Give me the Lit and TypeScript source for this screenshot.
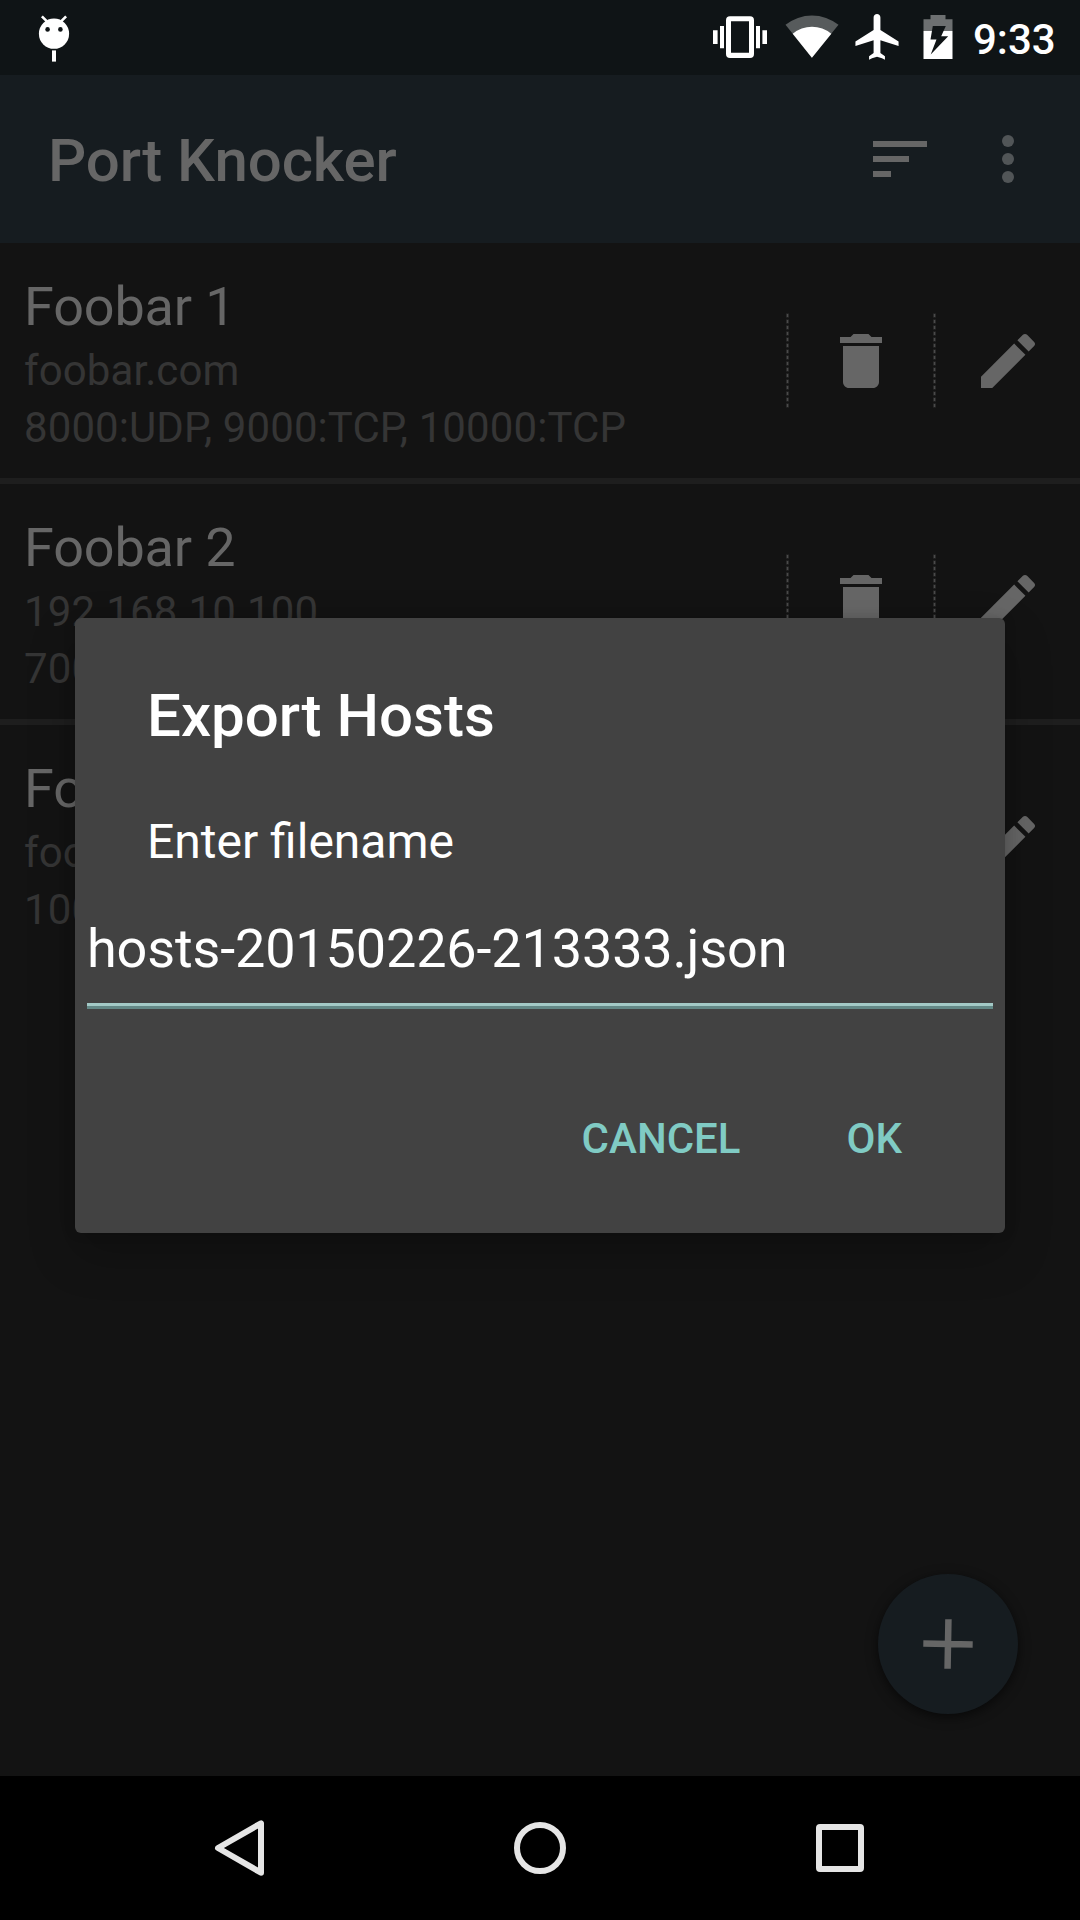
import { LitElement, html, css } from "lit";
import { customElement, property } from "lit/decorators.js";

interface Host {
  name: string;
  address: string;
  ports: string;
}

const HOSTS: Host[] = [
  { name: "Foobar 1", address: "foobar.com", ports: "8000:UDP, 9000:TCP, 10000:TCP" },
  { name: "Foobar 2", address: "192.168.10.100", ports: "7000" },
  { name: "Foobar 3", address: "foobar.com", ports: "10000" },
];

@customElement("status-bar")
class StatusBar extends LitElement {
  static styles = css`
    :host {
      display: flex;
      align-items: flex-start;
      height: 75px;
      box-sizing: border-box;
      padding: 0 23px 0 36px;
      background: #0f1416;
      color: #fff;
    }
    svg {
      display: block;
      flex: none;
    }
    .spacer {
      flex: 1;
    }
    .vibrate {
      margin-right: 18px;
    }
    .wifi {
      margin-right: 16px;
    }
    .plane {
      margin-right: 24px;
    }
    .battery {
      margin-right: 20px;
    }
    .time {
      width: 84px;
      font-size: 42px;
      font-weight: 500;
      line-height: 79px;
      white-space: nowrap;
    }
  `;

  render() {
    return html`
      <svg width="36" height="75" viewBox="36 0 36 75" fill="#fff">
        <circle cx="54" cy="33.7" r="15.1" />
        <path d="M41.9 16.4l5 5M66.1 16.4l-5 5" stroke="#fff" stroke-width="2.6" />
        <circle cx="47.6" cy="29.4" r="2.3" fill="#0f1416" />
        <circle cx="60.4" cy="29.4" r="2.3" fill="#0f1416" />
        <path d="M52 50.4h4v11.2h-4z" />
      </svg>
      <div class="spacer"></div>
      <svg class="vibrate" width="54" height="75" viewBox="713 0 54 75" fill="#fff">
        <path
          fill-rule="evenodd"
          d="M730 16.3h20a4 4 0 0 1 4 4V54a4 4 0 0 1-4 4h-20a4 4 0 0 1-4-4V20.3a4 4 0 0 1 4-4zM731 21.3v31.4h18V21.3z"
        />
        <path d="M720 26h4v22.3h-4zM713 30.3h4.6v13.7H713zM756 26h4v22.3h-4zM762.4 30.3h4.6v13.7h-4.6z" />
      </svg>
      <svg class="wifi" width="54" height="75" viewBox="784.5 0 54 75">
        <path d="M811.4 57.8L785 24.8a42.5 42.5 0 0 1 53 0z" fill="#575b5c" />
        <path d="M811.4 57.8L792.2 33.7a30 30 0 0 1 38.6 0z" fill="#fff" />
      </svg>
      <svg class="plane" width="44" height="75" viewBox="854.5 0 44 75">
        <path
          transform="translate(850.4 9.4) scale(2.27 2.29)"
          fill="#fff"
          d="M21 16v-2l-8-5V3.500c0-.83-.67-1.500-1.500-1.500S10 2.670 10 3.500V9l-8 5v2l8-2.500V19l-2 1.500V22l1.300-.7 2.200-.6 2.200.6 1.300.7v-1.500L13 19v-5.500l8 2.500z"
        />
      </svg>
      <svg class="battery" width="30" height="75" viewBox="922.5 0 30 75">
        <path d="M930 15h15v4.2h7V31h-29V19.2h7z" fill="#6d7071" />
        <path d="M923 31h29v28h-29z" fill="#fff" />
        <path d="M932.3 26h13l-4.6 10.3h7L930.2 54.5l5.8-15h-6z" fill="#0f1416" />
      </svg>
      <div class="time">9:33</div>
    `;
  }
}

@customElement("action-bar")
class ActionBar extends LitElement {
  static styles = css`
    :host {
      display: flex;
      align-items: center;
      height: 168px;
      box-sizing: border-box;
      padding: 0 36px 0 48px;
      background: #161c20;
      color: #666;
    }
    .title {
      flex: 1;
      font-size: 60px;
      font-weight: 500;
      line-height: 72px;
      letter-spacing: -0.1px;
      padding-top: 4px;
      white-space: nowrap;
    }
    svg {
      display: block;
      margin-left: 36px;
    }
  `;

  render() {
    return html`
      <div class="title">Port Knocker</div>
      <svg width="72" height="72" viewBox="0 0 24 24" fill="#666">
        <path d="M3 6h18v2H3zM3 11h12v2H3zM3 16h6v2H3z" />
      </svg>
      <svg width="72" height="72" viewBox="0 0 24 24" fill="#515557">
        <circle cx="12" cy="6" r="2" />
        <circle cx="12" cy="12" r="2" />
        <circle cx="12" cy="18" r="2" />
      </svg>
    `;
  }
}

@customElement("host-row")
class HostRow extends LitElement {
  @property({ attribute: false }) host!: Host;

  static styles = css`
    :host {
      display: flex;
      height: 235px;
      align-items: stretch;
    }
    .details {
      flex: 1;
      padding: 32px 0 0 24px;
      white-space: nowrap;
    }
    .name {
      font-size: 54px;
      line-height: 64px;
      letter-spacing: -0.15px;
      margin-bottom: 3px;
      color: #666;
    }
    .sub {
      font-size: 42px;
      line-height: 57px;
      letter-spacing: 0.09px;
      color: #353535;
    }
    .action {
      display: flex;
      align-items: center;
      width: 147px;
      padding-top: 1px;
      box-sizing: border-box;
    }
    .icon {
      margin-left: 36px;
    }
    svg {
      display: block;
      flex: none;
    }
  `;

  private separator() {
    return html`<svg width="3" height="96" viewBox="0 0 3 96">
      <path d="M1.5 .5v95" stroke="#2b2b2b" stroke-width="3" stroke-dasharray="4 2" />
      <path d="M1.5 1v95" stroke="#4a4a4a" stroke-width="1" stroke-dasharray="3 3" />
    </svg>`;
  }

  render() {
    return html`
      <div class="details">
        <div class="name">${this.host.name}</div>
        <div class="sub">${this.host.address}</div>
        <div class="sub">${this.host.ports}</div>
      </div>
      <div class="action">
        ${this.separator()}
        <svg class="icon" width="72" height="72" viewBox="0 0 24 24" fill="#666">
          <path d="M6 19c0 1.100.9 2 2 2h8c1.100 0 2-.9 2-2V7H6v12zM19 4h-3.500l-1-1h-5l-1 1H5v2h14V4z" />
        </svg>
      </div>
      <div class="action">
        ${this.separator()}
        <svg class="icon" width="72" height="72" viewBox="0 0 24 24" fill="#666">
          <path
            d="M3 17.250V21h3.750L17.810 9.940l-3.750-3.750L3 17.250zM20.710 7.040c.39-.39.39-1.020 0-1.410l-2.340-2.340c-.39-.39-1.020-.39-1.410 0l-1.830 1.830 3.750 3.750 1.830-1.830z"
          />
        </svg>
      </div>
    `;
  }
}

@customElement("export-dialog")
class ExportDialog extends LitElement {
  static styles = css`
    :host {
      display: flex;
      flex-direction: column;
      box-sizing: border-box;
      width: 930px;
      height: 615px;
      border-radius: 6px;
      background: #424242;
      color: #fff;
      box-shadow: 0 20px 48px rgba(0, 0, 0, 0.22), 0 0 12px rgba(0, 0, 0, 0.15);
      white-space: nowrap;
    }
    .title {
      padding: 62px 72px 0;
      font-size: 60px;
      font-weight: 500;
      line-height: 72px;
    }
    .message {
      padding: 62px 72px 0;
      font-size: 48px;
      line-height: 56px;
      font-variant-ligatures: common-ligatures;
    }
    .field {
      margin: 47px 12px 0;
      height: 86px;
      font-size: 54px;
      line-height: 64px;
      letter-spacing: -0.15px;
      border-bottom: 3px solid #a3c9c6;
      box-shadow: 0 3px 0 #638886;
    }
    .buttons {
      display: flex;
      justify-content: flex-end;
      gap: 106px;
      padding: 108px 103px 0 0;
      font-size: 42px;
      font-weight: 500;
      line-height: 50px;
      color: #80cbc4;
    }
  `;

  render() {
    return html`
      <div class="title">Export Hosts</div>
      <div class="message">Enter filename</div>
      <div class="field">hosts-20150226-213333.json</div>
      <div class="buttons">
        <div>CANCEL</div>
        <div>OK</div>
      </div>
    `;
  }
}

@customElement("nav-bar")
class NavBar extends LitElement {
  static styles = css`
    :host {
      display: flex;
      justify-content: center;
      align-items: center;
      gap: 216px;
      height: 144px;
      background: #000;
    }
    svg {
      display: block;
      width: 84px;
      height: 84px;
      fill: none;
      stroke: #e5e5e5;
      stroke-width: 6;
      stroke-linejoin: round;
    }
  `;

  render() {
    return html`
      <svg viewBox="198 1806 84 84"><path d="M261 1823.3v49.4L218 1848z" /></svg>
      <svg viewBox="498 1806 84 84"><circle cx="540" cy="1848" r="23" /></svg>
      <svg viewBox="798 1806 84 84"><rect x="819" y="1827" width="42" height="42" rx="1" /></svg>
    `;
  }
}

@customElement("app-root")
class AppRoot extends LitElement {
  static styles = css`
    :host {
      display: flex;
      flex-direction: column;
      position: relative;
      width: 1080px;
      height: 1920px;
      overflow: hidden;
      background: #131313;
      font-family: Roboto, sans-serif;
    }
    .list {
      flex: 1;
      display: flex;
      flex-direction: column;
    }
    .divider {
      height: 6px;
      background: #1e1e1e;
    }
    .fab {
      position: absolute;
      right: 62px;
      bottom: 206px;
      width: 140px;
      height: 140px;
      border-radius: 50%;
      background: #161c20;
      box-shadow: 0 3px 12px rgba(0, 0, 0, 0.6);
    }
    .fab svg {
      display: block;
    }
    .dialog {
      position: absolute;
      left: 75px;
      top: 618px;
    }
  `;

  render() {
    return html`
      <status-bar></status-bar>
      <action-bar></action-bar>
      <div class="list">
        ${HOSTS.map(
          (host, i) => html`
            ${i > 0 ? html`<div class="divider"></div>` : ""}
            <host-row .host=${host}></host-row>
          `
        )}
      </div>
      <nav-bar></nav-bar>
      <div class="fab">
        <svg width="140" height="140" viewBox="0 0 140 140">
          <path
            transform="rotate(1 70 70)"
            d="M45.3 70h49.4M70 45.3v49.4"
            stroke="#666"
            stroke-width="6.5"
          />
        </svg>
      </div>
      <export-dialog class="dialog"></export-dialog>
    `;
  }
}
